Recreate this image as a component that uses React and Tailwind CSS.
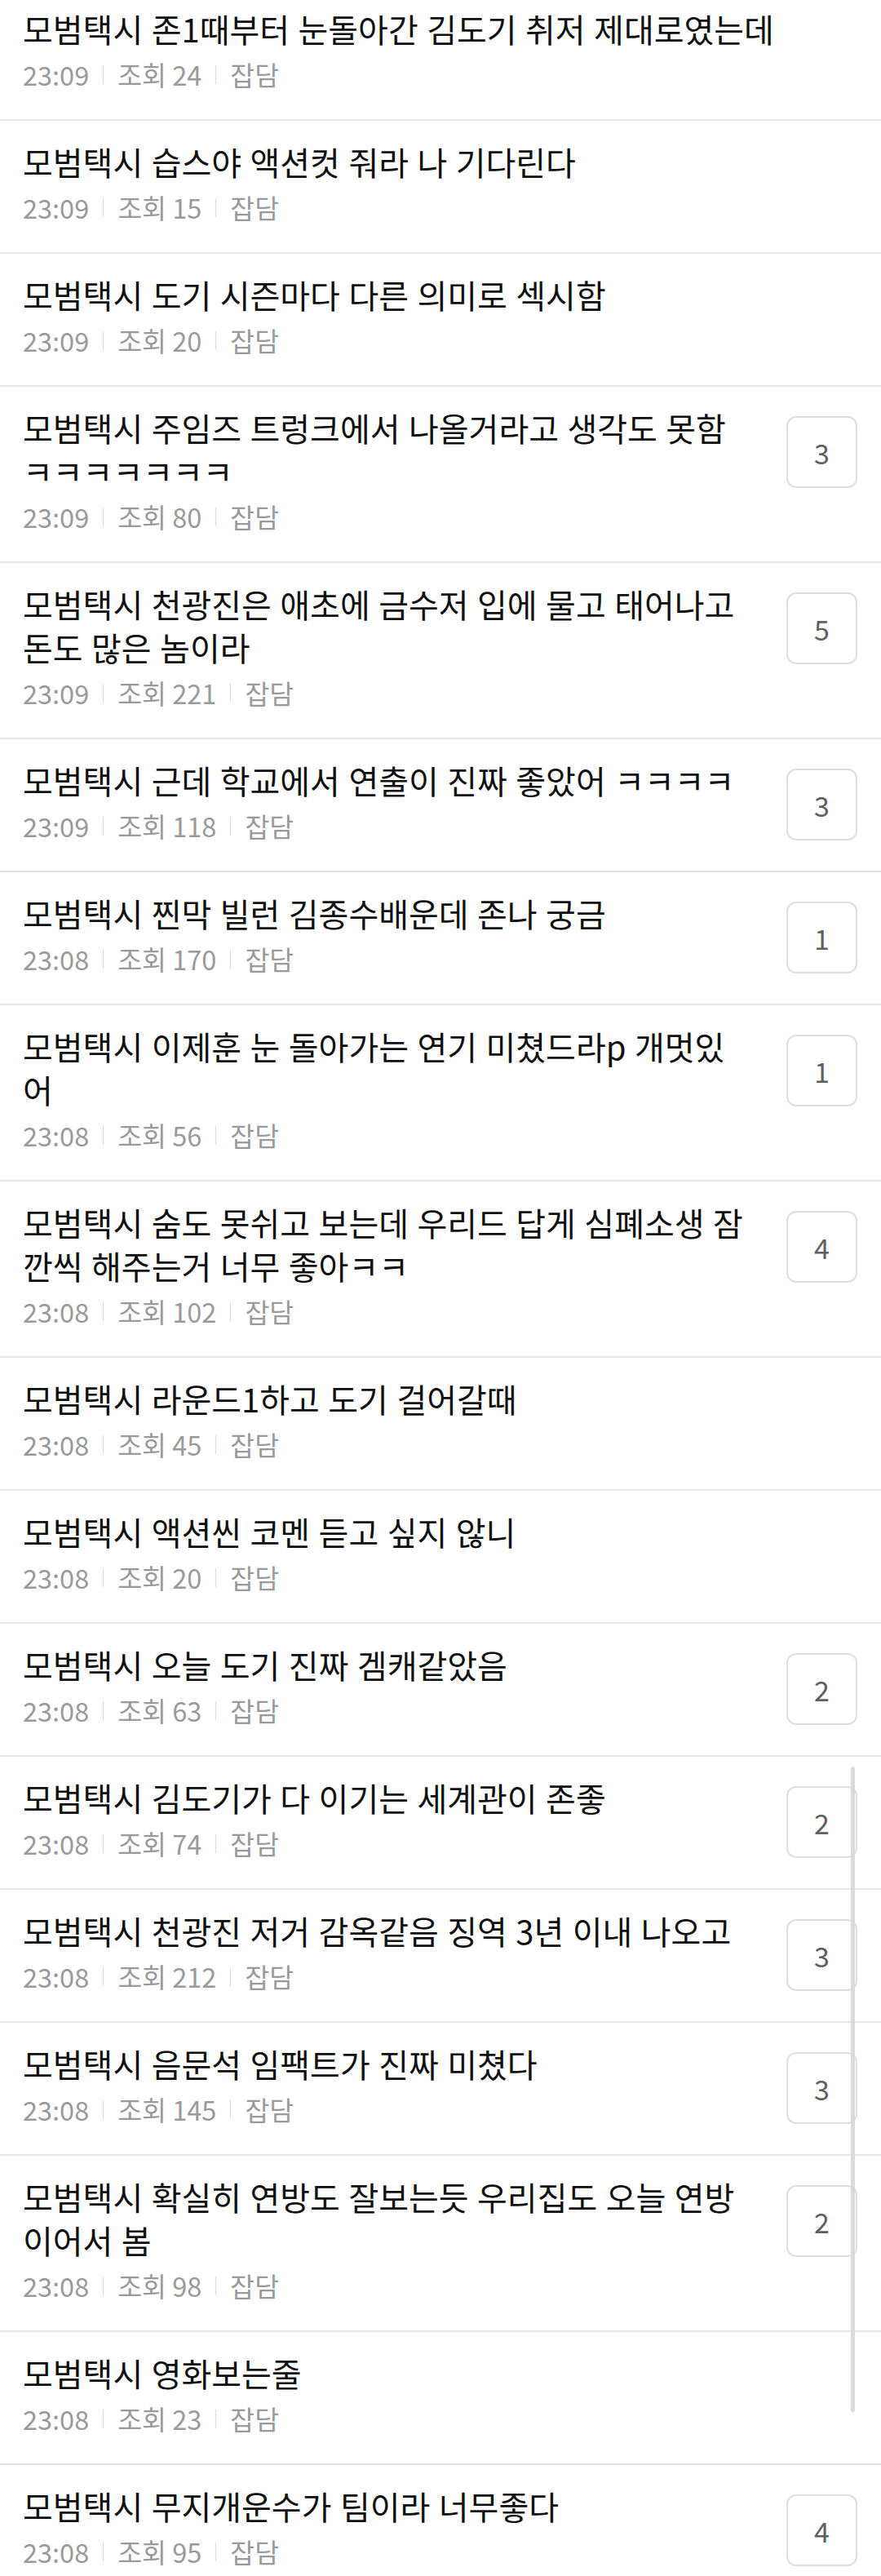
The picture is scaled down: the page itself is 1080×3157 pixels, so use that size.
const POSTS = [
  {title: '모범택시 존1때부터 눈돌아간 김도기 취저 제대로였는데', time: '23:09', views: 24},
  {title: '모범택시 습스야 액션컷 줘라 나 기다린다', time: '23:09', views: 15},
  {title: '모범택시 도기 시즌마다 다른 의미로 섹시함', time: '23:09', views: 20},
  {title: '모범택시 주임즈 트렁크에서 나올거라고 생각도 못함 ㅋㅋㅋㅋㅋㅋㅋ', time: '23:09', views: 80, comments: 3},
  {title: '모범택시 천광진은 애초에 금수저 입에 물고 태어나고 돈도 많은 놈이라', time: '23:09', views: 221, comments: 5},
  {title: '모범택시 근데 학교에서 연출이 진짜 좋았어 ㅋㅋㅋㅋ', time: '23:09', views: 118, comments: 3},
  {title: '모범택시 찐막 빌런 김종수배운데 존나 궁금', time: '23:08', views: 170, comments: 1},
  {title: '모범택시 이제훈 눈 돌아가는 연기 미쳤드라p 개멋있어', time: '23:08', views: 56, comments: 1},
  {title: '모범택시 숨도 못쉬고 보는데 우리드 답게 심폐소생 잠깐씩 해주는거 너무 좋아ㅋㅋ', time: '23:08', views: 102, comments: 4},
  {title: '모범택시 라운드1하고 도기 걸어갈때', time: '23:08', views: 45},
  {title: '모범택시 액션씬 코멘 듣고 싶지 않니', time: '23:08', views: 20},
  {title: '모범택시 오늘 도기 진짜 겜캐같았음', time: '23:08', views: 63, comments: 2},
  {title: '모범택시 김도기가 다 이기는 세계관이 존좋', time: '23:08', views: 74, comments: 2},
  {title: '모범택시 천광진 저거 감옥같음 징역 3년 이내 나오고', time: '23:08', views: 212, comments: 3},
  {title: '모범택시 음문석 임팩트가 진짜 미쳤다', time: '23:08', views: 145, comments: 3},
  {title: '모범택시 확실히 연방도 잘보는듯 우리집도 오늘 연방이어서 봄', time: '23:08', views: 98, comments: 2},
  {title: '모범택시 영화보는줄', time: '23:08', views: 23},
  {title: '모범택시 무지개운수가 팀이라 너무좋다', time: '23:08', views: 95, comments: 4},
];

const Divider = () => <span className="mx-[17px] inline-block h-[23px] w-px bg-[#d9d9d9]" />;

const PostRow = ({title, time, views, comments}) => {
  const hasBadge = comments != null;
  return (
    <li className="flex items-start border-b-2 border-[#e6e6e6] pl-[28px] pr-[29px]">
      <div className="min-w-0 flex-1 pt-[24px] pb-[32px]">
        <p
          className={`break-all text-[40px] leading-[53px] text-[#111] [word-spacing:1.5px] ${
            hasBadge ? 'max-w-[895px]' : ''
          }`}
        >
          {title}
        </p>
        <div className="mt-[6px] flex items-center text-[32.5px] leading-[46px] text-[#9a9a9a]">
          <span>{time}</span>
          <Divider />
          <span>조회 {views}</span>
          <Divider />
          <span>잡담</span>
        </div>
      </div>
      {hasBadge && (
        <div className="ml-[12px] mt-[36px] flex h-[88px] w-[87px] shrink-0 items-center justify-center rounded-[12px] border-2 border-[#dedede] bg-white text-[34px] text-[#606060]">
          {comments}
        </div>
      )}
    </li>
  );
};

function App() {
  return (
    <div className="relative h-screen w-full overflow-hidden bg-white font-['Noto_Sans_CJK_KR','Noto_Sans',sans-serif]">
      <ul className="-mt-[15px]">
        {POSTS.map((p, i) => (
          <PostRow key={i} {...p} />
        ))}
      </ul>
      {/* overlay scroll indicator */}
      <div className="absolute left-[1043px] top-[2165px] h-[791px] w-[5px] rounded-full bg-[#d6d6d6]/90" />
    </div>
  );
}

export default App;
